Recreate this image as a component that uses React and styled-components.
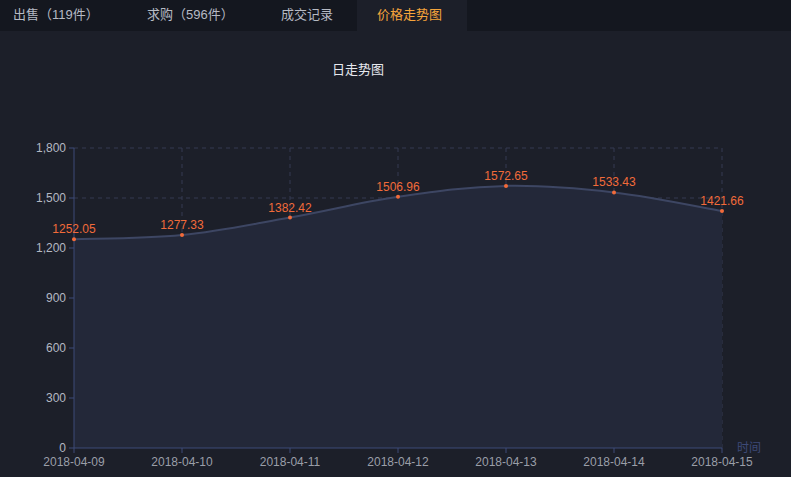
import React from "react";
import styled, { createGlobalStyle } from "styled-components";

const Global = createGlobalStyle`
  body { margin: 0; background: #1c1f29; font-family: "Liberation Sans", "Noto Sans CJK SC", sans-serif; }
`;

const Page = styled.div`
  width: 791px;
  height: 477px;
  background: #1c1f29;
  overflow: hidden;
`;

const Tabs = styled.div`
  display: flex;
  height: 31px;
  background: #14171f;
`;

const Tab = styled.div`
  width: ${({ w }) => w}px;
  padding-left: ${({ pl }) => pl}px;
  box-sizing: border-box;
  line-height: 30px;
  font-size: 13px;
  color: ${({ active }) => (active ? "#f5a43b" : "#b6bac4")};
  background: ${({ active }) => (active ? "#1c1f29" : "transparent")};
`;

const Title = styled.div`
  text-align: center;
  width: 716px;
  margin-top: 31px;
  font-size: 13px;
  color: #e6e8ee;
  line-height: 16px;
`;

const Chart = styled.svg`
  display: block;
  margin-top: 0;
`;

const dates = ["2018-04-09", "2018-04-10", "2018-04-11", "2018-04-12", "2018-04-13", "2018-04-14", "2018-04-15"];
const vals = [1252.05, 1277.33, 1382.42, 1506.96, 1572.65, 1533.43, 1421.66];
const OY = 78; // svg top is at page y 78
const X = (i) => 74 + i * 108;
const Y = (v) => 448 - v / 6 - OY;

function smooth(pts) {
  let d = `M${pts[0][0]},${pts[0][1]}`;
  for (let i = 0; i < pts.length - 1; i++) {
    const p0 = pts[i - 1] || pts[i], p1 = pts[i], p2 = pts[i + 1], p3 = pts[i + 2] || p2;
    const t = 0.18;
    d += ` C${p1[0] + (p2[0] - p0[0]) * t},${p1[1] + (p2[1] - p0[1]) * t} ${p2[0] - (p3[0] - p1[0]) * t},${p2[1] - (p3[1] - p1[1]) * t} ${p2[0]},${p2[1]}`;
  }
  return d;
}

export default function App() {
  const pts = vals.map((v, i) => [X(i), Y(v)]);
  const line = smooth(pts);
  const base = Y(0);
  return (
    <Page>
      <Global />
      <Tabs>
        <Tab w={127} pl={13}>出售（119件）</Tab>
        <Tab w={130} pl={20}>求购（596件）</Tab>
        <Tab w={100} pl={24}>成交记录</Tab>
        <Tab w={110} pl={20} active>价格走势图</Tab>
      </Tabs>
      <Title>日走势图</Title>
      <Chart width="791" height="399" fontFamily="Liberation Sans, sans-serif">
        {[300, 600, 900, 1200, 1500, 1800].map((v) => (
          <line key={v} x1={74} x2={722} y1={Y(v)} y2={Y(v)} stroke="#353b52" strokeDasharray="4 4" />
        ))}
        {dates.map((d, i) => i > 0 && (
          <line key={d} x1={X(i)} x2={X(i)} y1={Y(1800)} y2={base} stroke="#353b52" strokeDasharray="4 4" />
        ))}
        <path d={`${line} L${X(6)},${base} L${X(0)},${base} Z`} fill="#232839" />
        <path d={line} fill="none" stroke="#3d4663" strokeWidth="2" />
        <line x1={74} x2={74} y1={Y(1800)} y2={base} stroke="#3d4a78" />
        <line x1={74} x2={722} y1={base} y2={base} stroke="#3d4a78" />
        {[0, 300, 600, 900, 1200, 1500, 1800].map((v) => (
          <g key={v}>
            <line x1={69} x2={74} y1={Y(v)} y2={Y(v)} stroke="#3d4a78" />
            <text x={66} y={Y(v) + 4} fill="#b4b8c2" fontSize="12" textAnchor="end">
              {v.toLocaleString("en-US")}
            </text>
          </g>
        ))}
        {dates.map((d, i) => (
          <g key={d}>
            <line x1={X(i)} x2={X(i)} y1={base} y2={base + 5} stroke="#3d4a78" />
            <text x={X(i)} y={base + 18} fill="#9a9ea8" fontSize="12" textAnchor="middle">{d}</text>
          </g>
        ))}
        <text x={737} y={base + 4} fill="#3d4a78" fontSize="12" fontFamily="Noto Sans CJK SC, sans-serif">时间</text>
        {pts.map(([x, y], i) => (
          <g key={i}>
            <circle cx={x} cy={y} r="2" fill="#f26b3a" />
            <text x={x} y={y - 6} fill="#f26b3a" fontSize="12" textAnchor="middle">{vals[i].toFixed(2)}</text>
          </g>
        ))}
      </Chart>
    </Page>
  );
}
